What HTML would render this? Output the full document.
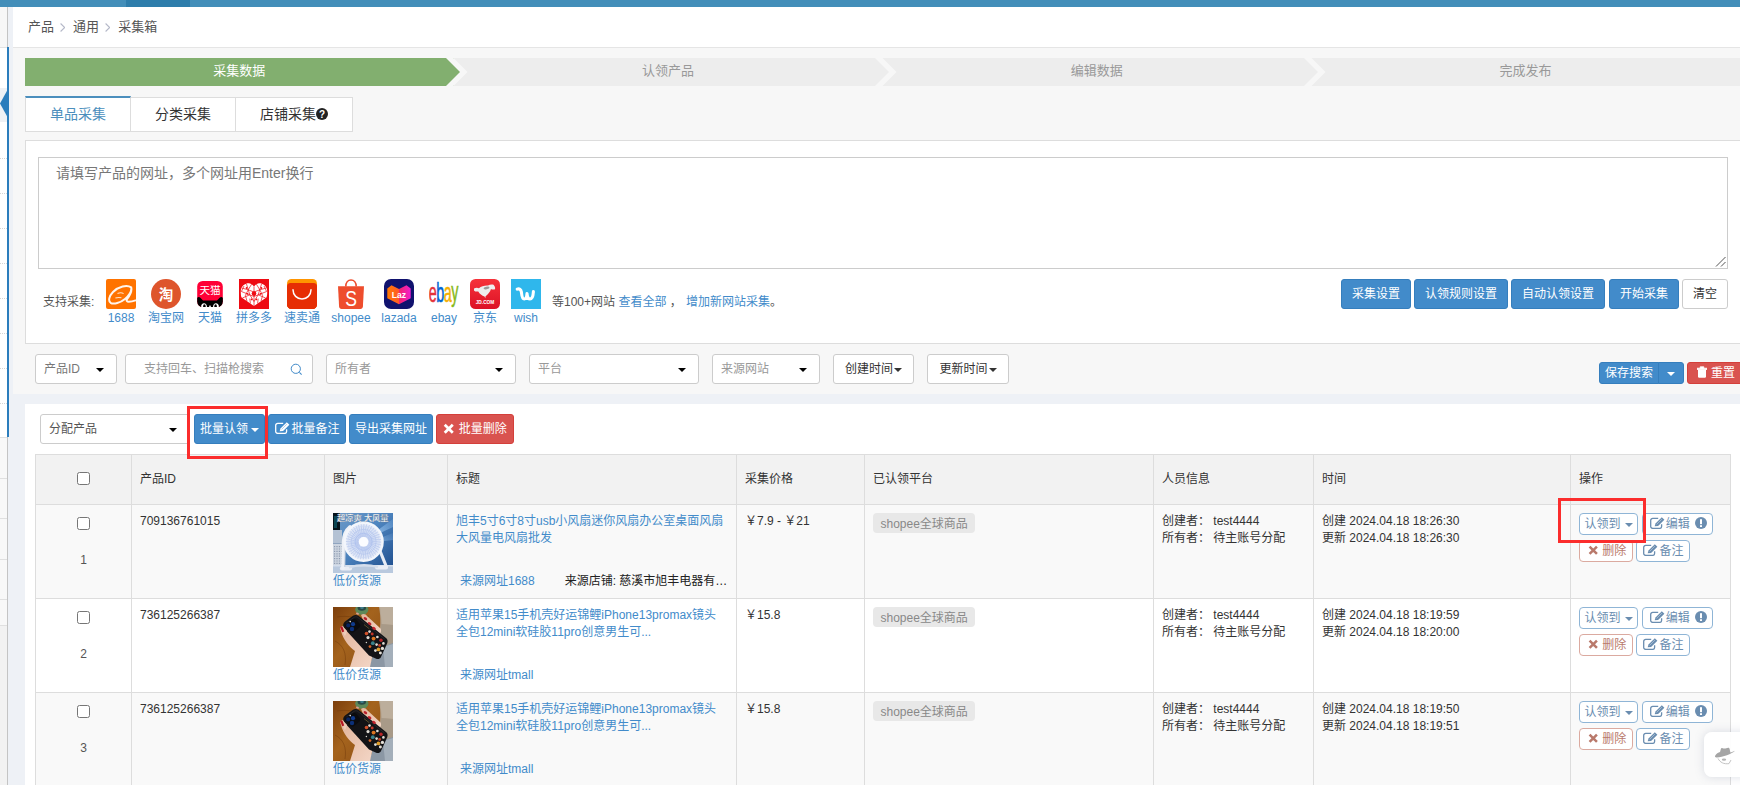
<!DOCTYPE html>
<html lang="zh-CN">
<head>
<meta charset="utf-8">
<title>采集箱</title>
<style>
*{box-sizing:border-box}
html,body{margin:0;padding:0}
body{width:1740px;height:785px;overflow:hidden;position:relative;background:#eef1f6;
 font-family:"Liberation Sans","Noto Sans CJK SC",sans-serif;font-size:12px;line-height:1.428571;color:#333}
a{color:#428bca;text-decoration:none}
.abs{position:absolute}
svg{display:block}
.ic{display:inline-block;vertical-align:middle}
/* top bar */
#topbar{left:0;top:0;width:1740px;height:6.5px;background:#438eb9}
#topbar i{position:absolute;left:126px;top:0;width:64px;height:6.5px;background:#2e7dab}
/* sidebar */
#side{left:0;top:6.5px;width:8px;height:779px;background:#f2f2f2;border-right:1px solid #c4c4c4}
#side .top{position:absolute;left:0;top:0;width:7px;height:41px;background:#f7f7f7;border-bottom:1px solid #e2e2e2}
#side .act{position:absolute;left:0;top:41px;width:7px;height:389px;background:#fff}
#side .hl{position:absolute;left:0;top:81px;width:7px;height:34px;background:#eef1f5}
#side .dot{position:absolute;left:0;width:7px;height:0;border-top:1px dotted #d5d5d5}
#side .sol{position:absolute;left:0;width:7px;height:0;border-top:1px solid #e0e0e0}
#side .low{position:absolute;left:0;top:430px;width:7px;height:188px;background:#f8f8f8}
#sideblue{left:7px;top:47px;width:2px;height:390px;background:#2b7dbc}
#sidearrow{left:0;top:89px}
/* breadcrumb */
#crumb{left:13px;top:6.5px;width:1727px;height:41.5px;background:#fff;border-bottom:1px solid #e5e5e5;font-size:13px;color:#555;line-height:40px;padding-left:15px}
#crumb span.t{color:#555}
#crumb span.s{color:#b2b6bf;margin:0 6px 0 5px;font-size:13px}
#sec1{left:13px;top:48px;width:1727px;height:346px;background:#f7f7f7}
/* steps */
#steps{left:25px;top:58px;width:1715px;height:28px;background:#ededed;display:flex;font-size:13px;line-height:26px;color:#999;text-align:center}
#steps div{flex:1 1 0;position:relative}
#steps .on{background:#82af6f;color:#fff}
#steps svg{position:absolute;top:0}
/* tabs */
#tabs{left:25px;top:96px;height:36px;display:flex;align-items:flex-end;font-size:14px;line-height:20px}
#tabs div{height:35px;padding:6px 0 0;text-align:center;background:#fff;border:1px solid #ddd;border-left-width:0;color:#333}
#tabs div:first-child{height:36px;border-left-width:1px;border-top:2px solid #4c8fbd;color:#4c8fbd;padding-top:6px}
/* panel 1 */
#p1{left:25px;top:140px;width:1730px;height:204px;background:#fff;border:1px solid #ddd}
#ta{left:38px;top:157px;width:1690px;height:112px;background:#fff;border:1px solid #ccc;font-size:14px;color:#777;padding:5px 17px;line-height:20px}
.btn{position:absolute;height:30px;line-height:28px;text-align:center;color:#fff;background:#428bca;border:1px solid #357ebd;border-radius:3px;font-size:12px;white-space:nowrap}
.btn.red{background:#d9534f;border-color:#d43f3a}
.btn.wh{background:#fff;border-color:#ccc;color:#333}
.btn.sm{height:22px;line-height:20px}
/* form controls */
.sel{position:absolute;height:30px;border:1px solid #ccc;border-radius:3px;background:#fff;line-height:28px;padding-left:8px;color:#555;font-size:12px;white-space:nowrap}
.sel.ph{color:#999}
.sel.noc:after{display:none}
.sel:after{content:"";position:absolute;right:12px;top:12.5px;border:4px solid transparent;border-top:4px solid #000;border-bottom-width:0;border-left-width:4px;border-right-width:4px}
.car{display:inline-block;border:4px solid transparent;border-top-color:currentColor;border-bottom-width:0;vertical-align:middle;margin-left:2px}
/* panel 2 */
#p2{left:25px;top:404px;width:1730px;height:400px;background:#fff}
.redbox{position:absolute;border:3px solid #fb2d2d;z-index:5}
/* table */
#tb{left:35px;top:454px;width:1695px;border-collapse:collapse;table-layout:fixed;font-size:12px}
#tb th,#tb td{border:1px solid #ddd;padding:8px;vertical-align:top;text-align:left;font-weight:normal;color:#333}
#tb th{background:#f2f2f2;height:50px;vertical-align:middle;color:#333}
#tb tr.odd td{background:#f9f9f9}
#tb td{height:94px;background:#fff}
#tb td.c,#tb th.c{text-align:center}
.cb{display:inline-block;width:13px;height:13px;border:1px solid #767676;border-radius:2.5px;background:#fff;vertical-align:top}
.badge{display:inline-block;background:#e8e8e8;color:#888;border-radius:4px;padding:0 7.5px;height:20px;line-height:22px;margin-top:0}
.ob{display:inline-block;height:22px;line-height:20px;border:1px solid #8fb5d6;border-radius:4px;background:#fff;color:#6a8db0;font-size:12px;text-align:center;white-space:nowrap;vertical-align:top}
.ob.del{border-color:#dbaaa0;color:#b9796b}
</style>
</head>
<body>
<div id="topbar" class="abs"><i></i></div>
<div id="side" class="abs">
 <div class="top"></div><div class="act"></div><div class="hl"></div>
 <div class="dot" style="top:151px"></div><div class="dot" style="top:186px"></div><div class="dot" style="top:221px"></div><div class="dot" style="top:256px"></div><div class="dot" style="top:291px"></div><div class="dot" style="top:326px"></div><div class="dot" style="top:361px"></div><div class="dot" style="top:396px"></div>
 <div class="low"></div>
 <div class="sol" style="top:430px"></div><div class="sol" style="top:471px"></div><div class="sol" style="top:511px"></div><div class="sol" style="top:552px"></div><div class="sol" style="top:592px"></div><div class="sol" style="top:618px"></div>
</div>
<div id="sideblue" class="abs"></div>
<svg id="sidearrow" class="abs" width="8" height="29" viewBox="0 0 8 29"><path d="M8 0 L0 14.5 L8 29Z" fill="#2b7dbc"/></svg>
<div id="crumb" class="abs"><span class="t">产品</span><svg class="ic" style="margin:0 8px 0 5.7px" width="5.4" height="9" viewBox="0 0 5.4 9"><path d="M.6 .5L4.7 4.5L.6 8.5" fill="none" stroke="#b4b8c8" stroke-width="1.1"/></svg><span class="t">通用</span><svg class="ic" style="margin:0 8px 0 5.7px" width="5.4" height="9" viewBox="0 0 5.4 9"><path d="M.6 .5L4.7 4.5L.6 8.5" fill="none" stroke="#b4b8c8" stroke-width="1.1"/></svg><span class="t">采集箱</span></div>
<div id="sec1" class="abs"></div>

<div id="steps" class="abs">
 <div class="on">采集数据<svg style="left:421px" width="22" height="28" viewBox="0 0 22 28"><path d="M0 0H7.5L21.5 14L7.5 28H0Z" fill="#f7f7f7"/><path d="M0 0L14 14L0 28Z" fill="#82af6f"/></svg></div>
 <div>认领产品<svg style="left:421px" width="22" height="28" viewBox="0 0 22 28"><path d="M0 0H7.5L21.5 14L7.5 28H0Z" fill="#f7f7f7"/><path d="M0 0L14 14L0 28Z" fill="#ededed"/></svg></div>
 <div>编辑数据<svg style="left:421px" width="22" height="28" viewBox="0 0 22 28"><path d="M0 0H7.5L21.5 14L7.5 28H0Z" fill="#f7f7f7"/><path d="M0 0L14 14L0 28Z" fill="#ededed"/></svg></div>
 <div>完成发布</div>
</div>
<div id="tabs" class="abs">
 <div style="width:106px">单品采集</div><div style="width:105px">分类采集</div><div style="width:117px">店铺采集<svg class="ic" style="margin:-3px 0 0 0" width="12" height="12" viewBox="0 0 12 12"><circle cx="6" cy="6" r="6" fill="#222"/><text x="6" y="9.6" font-size="10" font-weight="bold" text-anchor="middle" fill="#fff" font-family="Liberation Sans,sans-serif">?</text></svg></div>
</div>
<div id="p1" class="abs"></div>
<div id="ta" class="abs">请填写产品的网址，多个网址用Enter换行<svg class="abs" style="right:1px;bottom:1px" width="11" height="11" viewBox="0 0 11 11"><path d="M10.5 1L1 10.5M10.5 6L6 10.5" stroke="#555" stroke-width="1" fill="none"/></svg></div>
<div class="abs" style="left:43px;top:293px;font-size:12px;color:#555;line-height:18px">支持采集:</div>
<div id="sites" class="abs" style="left:0;top:279px;font-size:12px;line-height:19px;text-align:center;color:#428bca">
<div class="abs" style="left:91px;top:0;width:60px"><svg style="margin:0 auto" width="30" height="30" viewBox="0 0 30 30"><rect width="30" height="30" rx="2" fill="#ff7300"/><path d="M25.2 8.4C21 5.6 12.5 7.4 7 13C3 17.2 2 22 4.6 23.8C7.6 25.6 14.5 23.8 19 20C22 17.4 26 12.5 25.2 8.4C26.4 12.8 23.4 17 21 20.2C20.2 21.6 20.8 22.8 22.8 22.8C25.2 22.6 27.6 22 29.6 21.4" fill="none" stroke="#fff" stroke-width="2" stroke-linecap="round" stroke-linejoin="round" opacity=".93"/><path d="M11.5 14.6C13.5 13.6 16 13.6 17.6 14.6M9.4 19C11.4 18.3 13.4 18.3 15.4 18.8" fill="none" stroke="#ffe3c8" stroke-width="1.1"/></svg>1688</div>
<div class="abs" style="left:136px;top:0;width:60px"><svg style="margin:0 auto" width="30" height="30" viewBox="0 0 30 30"><circle cx="15" cy="15" r="15" fill="#de552c"/><text x="15" y="20.8" font-size="14.5" font-weight="bold" text-anchor="middle" fill="#fff" font-family="Liberation Sans,Noto Sans CJK SC,sans-serif">淘</text></svg>淘宝网</div>
<div class="abs" style="left:180px;top:0;width:60px"><svg style="margin:0 auto" width="30" height="30" viewBox="0 0 30 30"><defs><clipPath id="tmc"><rect x="2.2" y="2" width="25.6" height="26" rx="5.5"/></clipPath></defs><g clip-path="url(#tmc)"><rect x="2" y="2" width="26" height="26" fill="#ff0036"/><path d="M2 28V19C2.8 17.6 4.6 17.8 5.4 18.8L8 21.4H22L24.6 18.8C25.4 17.8 27.2 17.6 28 19V28Z" fill="#000"/><path d="M6 28C6 25.6 7.4 24.2 9 24.2C10.6 24.2 12 25.6 12 28ZM18 28C18 25.6 19.4 24.2 21 24.2C22.6 24.2 24 25.6 24 28Z" fill="#fff"/><ellipse cx="9.4" cy="27.2" rx="1.3" ry="1.9" fill="#000"/><ellipse cx="20.6" cy="27.2" rx="1.3" ry="1.9" fill="#000"/><rect x="14.2" y="26.6" width="1.6" height="1.4" fill="#fff"/></g><text x="15" y="14.9" font-size="10.6" text-anchor="middle" fill="#fff" font-family="Liberation Sans,Noto Sans CJK SC,sans-serif">天猫</text></svg>天猫</div>
<div class="abs" style="left:224px;top:0;width:60px"><svg style="margin:0 auto" width="30" height="30" viewBox="0 0 30 30"><rect width="30" height="30" fill="#ee0a12"/><path d="M15 27L2.6 18.4C1.6 17.6 1.6 11 2.2 9.6C3.4 6.4 6.6 4 10 4.2C12.4 4.4 14 6 15 7.8C16 6 17.6 4.4 20 4.2C23.4 4 26.6 6.4 27.8 9.6C28.4 11 28.4 17.6 27.4 18.4Z" fill="#fff"/><path d="M15 7.8V27M2.4 12.5L15 17.5L27.6 12.5M7.5 5L10.8 15.8M22.5 5L19.2 15.8M3.4 19L10.8 15.8L15 22.5M26.6 19L19.2 15.8L15 22.5M2.6 9L9.2 10.8L12.6 5.2M27.4 9L20.8 10.8L17.4 5.2M9.2 10.8L15 13L20.8 10.8M6.4 16.4L8 22.2M23.6 16.4L22 22.2M10.8 19.6L11.4 24.4M19.2 19.6L18.6 24.4M5 7L2.4 12.5M25 7L27.6 12.5M9.2 10.8L6.4 16.4M20.8 10.8L23.6 16.4" stroke="#ee0a12" stroke-width=".7" fill="none"/><circle cx="15" cy="14.6" r="2.3" fill="#ee0a12"/><circle cx="7.6" cy="9" r=".9" fill="#ee0a12"/><circle cx="22.4" cy="9" r=".9" fill="#ee0a12"/><circle cx="8.4" cy="14.8" r=".9" fill="#ee0a12"/><circle cx="21.6" cy="14.8" r=".9" fill="#ee0a12"/><circle cx="12.6" cy="20.4" r=".9" fill="#ee0a12"/><circle cx="17.4" cy="20.4" r=".9" fill="#ee0a12"/></svg>拼多多</div>
<div class="abs" style="left:272px;top:0;width:60px"><svg style="margin:0 auto" width="30" height="30" viewBox="0 0 30 30"><defs><clipPath id="aec"><rect width="30" height="30" rx="4.5"/></clipPath></defs><g clip-path="url(#aec)"><rect width="30" height="30" fill="#ff9500"/><rect y="4" width="30" height="26" rx="3.5" fill="#e62e04"/><rect y="10" width="30" height="20" fill="#e62e04"/></g><path d="M6 10.8C6 16 10 20 15 20C20 20 24 16 24 10.8" fill="none" stroke="#fff" stroke-width="1.5" stroke-linecap="round"/></svg>速卖通</div>
<div class="abs" style="left:321px;top:0;width:60px"><svg style="margin:0 auto" width="30" height="30" viewBox="0 0 30 30"><path d="M2 7.3H28L26.9 27.6C26.8 28.9 25.8 30 24.5 30H5.5C4.2 30 3.2 28.9 3.1 27.6Z" fill="#ee4d2d"/><path d="M9.8 7.5C9.8 3.8 12 1 15 1C18 1 20.2 3.8 20.2 7.5" fill="none" stroke="#ee4d2d" stroke-width="1.6"/><text transform="translate(15.2,26.6) scale(.8,1)" font-size="22" text-anchor="middle" fill="#fff" font-family="Liberation Sans,Noto Sans CJK SC,sans-serif">S</text></svg>shopee</div>
<div class="abs" style="left:369px;top:0;width:60px"><svg style="margin:0 auto" width="30" height="30" viewBox="0 0 30 30"><defs><linearGradient id="lzg" x1="0" x2="1"><stop offset="0" stop-color="#ff7a00"/><stop offset=".5" stop-color="#ff5a2a"/><stop offset=".52" stop-color="#f5246c"/><stop offset="1" stop-color="#f01ed0"/></linearGradient></defs><rect width="30" height="30" rx="7" fill="#10126e"/><path d="M3.3 9.5L7.5 6.3L15 10L22.5 6.3L26.7 9.5V19.2L15 25.3L3.3 19.2Z" fill="url(#lzg)"/><text x="15" y="18.8" font-size="8.6" font-weight="bold" text-anchor="middle" fill="#fff" font-family="Liberation Sans,Noto Sans CJK SC,sans-serif">Laz</text></svg>lazada</div>
<div class="abs" style="left:414px;top:0;width:60px"><svg style="margin:0 auto" width="30" height="30" viewBox="0 0 30 30"><g transform="translate(-0.3,23.3) scale(.82,1.58)" font-size="17.5" font-family="Liberation Sans,Noto Sans CJK SC,sans-serif"><text x="0" y="0" fill="#e53238" stroke="#e53238" stroke-width=".35">e</text><text x="9.1" y="0" fill="#0064d2" stroke="#0064d2" stroke-width=".35">b</text><text x="18.3" y="0" fill="#f5af02" stroke="#f5af02" stroke-width=".35">a</text><text x="27.4" y="0" fill="#86b817" stroke="#86b817" stroke-width=".35" transform="translate(0,-.6)">y</text></g></svg>ebay</div>
<div class="abs" style="left:455px;top:0;width:60px"><svg style="margin:0 auto" width="30" height="30" viewBox="0 0 30 30"><defs><linearGradient id="jdg" x1="0" y1="0" x2="0" y2="1"><stop offset="0" stop-color="#f6323a"/><stop offset="1" stop-color="#dc1226"/></linearGradient></defs><rect width="30" height="30" rx="5.5" fill="url(#jdg)"/><path d="M4 9.5C5.5 8.6 7.5 8.4 9 9.3C11 7.5 14.5 6.4 18 6.6C19.5 5.6 21.8 5.2 23.5 5.8C24.6 6.8 25.5 8.6 25 10.2C23.5 10.8 22 10.6 21 10C20 13 18 15.6 15.6 17.2L15.3 19.2L14.5 17.6C12 16.8 9.5 14.6 8.3 12.4C6.6 12.9 5 12.5 4 11.4Z" fill="#eee"/><ellipse cx="16.5" cy="9" rx="3" ry="1.2" fill="#9a9a9a" transform="rotate(-12 16.5 9)"/><text x="15" y="24.8" font-size="4.8" font-weight="bold" text-anchor="middle" fill="#fff" font-family="Liberation Sans,Noto Sans CJK SC,sans-serif">JD.COM</text></svg>京东</div>
<div class="abs" style="left:496px;top:0;width:60px"><svg style="margin:0 auto" width="30" height="30" viewBox="0 0 30 30"><rect width="30" height="30" fill="#2fb7ec"/><path d="M6.2 10.2C8.3 9.3 10 10.6 10.4 13C10.8 16.5 11 20 13.2 20C15 20 15.8 17.5 16 14.5C16.3 18 17.2 20 19 20C21.3 20 22.2 16 22.4 12.6" fill="none" stroke="#fff" stroke-width="3.1" stroke-linecap="round" stroke-linejoin="round"/></svg>wish</div>

</div>
<div class="abs" style="left:552px;top:293px;font-size:12px;color:#555;line-height:18px;white-space:nowrap">等100+网站 <a>查看全部</a> ， <a style="margin-left:1px">增加新网站采集</a>。</div>
<div class="btn" style="left:1341px;top:279px;width:70px">采集设置</div>
<div class="btn" style="left:1414px;top:279px;width:94px">认领规则设置</div>
<div class="btn" style="left:1511px;top:279px;width:94px">自动认领设置</div>
<div class="btn" style="left:1609px;top:279px;width:70px">开始采集</div>
<div class="btn wh" style="left:1682px;top:279px;width:46px">清空</div>

<div class="sel" style="left:35px;top:354px;width:82px;color:#777">产品ID</div>
<div class="sel ph noc" style="left:125px;top:354px;width:188px;padding-left:18px">支持回车、扫描枪搜索<svg class="abs" style="right:9px;top:8px" width="13" height="13" viewBox="0 0 13 13"><circle cx="5.8" cy="5.8" r="4.6" fill="none" stroke="#428bca" stroke-width="1"/><path d="M9.4 9.4L11.6 11.6" stroke="#428bca" stroke-width="1.1"/></svg></div>
<div class="sel ph" style="left:326px;top:354px;width:190px">所有者</div>
<div class="sel ph" style="left:529px;top:354px;width:170px">平台</div>
<div class="sel ph" style="left:712px;top:354px;width:108px">来源网站</div>
<div class="btn wh" style="left:833px;top:354px;width:81px">创建时间<span class="car" style="border-width:4.5px 4.5px 0;margin-left:1px"></span></div>
<div class="btn wh" style="left:927px;top:354px;width:82px">更新时间<span class="car" style="border-width:4.5px 4.5px 0;margin-left:1px"></span></div>
<div class="btn sm" style="left:1599px;top:362px;width:60px;border-radius:3px 0 0 3px">保存搜索</div>
<div class="btn sm" style="left:1658px;top:362px;width:26px;border-radius:0 3px 3px 0;border-left-color:#357ebd"><span class="car" style="margin:0"></span></div>
<div class="btn sm red" style="left:1687px;top:362px;width:60px;text-align:left;padding-left:9px"><svg class="ic" style="margin:-3px 4px 0 0" width="10" height="12" viewBox="0 0 10 12"><path d="M0 2.2H10V3.4H0ZM3.2 2.2V.8H6.8V2.2" fill="currentColor" stroke="currentColor" stroke-width=".8"/><path d="M1 3.6H9V10.6A1.2 1.2 0 0 1 7.8 11.8H2.2A1.2 1.2 0 0 1 1 10.6Z" fill="currentColor"/></svg>重置</div>

<div id="p2" class="abs"></div>
<div class="sel" style="left:40px;top:414px;width:150px">分配产品</div>
<div class="btn" style="left:194px;top:414px;width:71px">批量认领<span class="car" style="margin-left:3px"></span></div>
<div class="btn" style="left:268px;top:414px;width:78px;padding-left:1px"><svg class="ic" style="margin:-4px 1px 0 0" width="15" height="12" viewBox="0 0 15 12"><path d="M11.6 7.2V9.4A2 2 0 0 1 9.6 11.4H2.7A2 2 0 0 1 .7 9.4V3.4A2 2 0 0 1 2.7 1.4H8.2" fill="none" stroke="currentColor" stroke-width="1.3"/><path d="M4.7 9.3L5.5 6.5L11.8 .2L14.4 2.8L8.1 9.1Z" fill="currentColor"/><path d="M6.6 7.4L11.9 2.1" stroke="#428bca" stroke-width=".7" opacity=".55"/></svg>批量备注</div>
<div class="btn" style="left:349px;top:414px;width:84px">导出采集网址</div>
<div class="btn red" style="left:436px;top:414px;width:78px"><svg class="ic" style="margin:-2px 4px 0 0" width="11.5" height="11.5" viewBox="0 0 10 10"><path d="M1.5 1.5L8.5 8.5M8.5 1.5L1.5 8.5" stroke="currentColor" stroke-width="2.4" fill="none"/></svg>批量删除</div>
<div class="redbox" style="left:187px;top:406px;width:81px;height:53px"></div>

<table id="tb" class="abs"><colgroup><col style="width:96px"><col style="width:193px"><col style="width:123px"><col style="width:289px"><col style="width:128px"><col style="width:289px"><col style="width:160px"><col style="width:257px"><col style="width:160px"></colgroup>
<tr><th class="c"><span class="cb" style="vertical-align:middle;margin-top:-3px"></span></th><th>产品ID</th><th>图片</th><th>标题</th><th>采集价格</th><th>已认领平台</th><th>人员信息</th><th>时间</th><th>操作</th></tr>
<tr class="odd"><td class="c"><span class="cb" style="margin-top:4px"></span><div style="margin-top:22px;color:#555">1</div></td><td>709136761015</td><td><svg width="60" height="60" viewBox="0 0 60 60"><defs><linearGradient id="fbg" x1="0" y1="0" x2="1" y2="1"><stop offset="0" stop-color="#6f9bc8"/><stop offset=".45" stop-color="#4f86c0"/><stop offset="1" stop-color="#1d4c8c"/></linearGradient><radialGradient id="fgr"><stop offset="0" stop-color="#f4f7ff"/><stop offset=".35" stop-color="#cfdcf6"/><stop offset=".75" stop-color="#dbe4f6"/><stop offset="1" stop-color="#eef2fa"/></radialGradient><linearGradient id="fry" x1="0" y1="1" x2="1" y2="0"><stop offset="0" stop-color="#bfe0ff" stop-opacity=".9"/><stop offset="1" stop-color="#9fd0ff" stop-opacity=".15"/></linearGradient></defs><rect width="60" height="60" fill="url(#fbg)"/><path d="M30 28L60 6V14Z" fill="url(#fry)"/><path d="M34 30L60 20V27Z" fill="url(#fry)" opacity=".6"/><rect x="0" y="0" width="7" height="17" fill="#06141c"/><rect x="1" y="3" width="3" height="12" fill="#0d5a6a" opacity=".7"/><path d="M0 17H9V30H0Z" fill="#b4c2d4"/><path d="M0 30H14V33H0Z" fill="#8fa4bf"/><rect x="0" y="31" width="12" height="22" fill="#cdd5e0"/><path d="M1 33h1.2v1.2h-1.2zM1 35.4h1.2v1.2h-1.2zM1 37.8h1.2v1.2h-1.2zM1 40.2h1.2v1.2h-1.2zM1 42.6h1.2v1.2h-1.2zM1 45h1.2v1.2h-1.2zM1 47.4h1.2v1.2h-1.2zM1 49.8h1.2v1.2h-1.2zM3.4 33h1.2v1.2h-1.2zM3.4 35.4h1.2v1.2h-1.2zM3.4 37.8h1.2v1.2h-1.2zM3.4 40.2h1.2v1.2h-1.2zM3.4 42.6h1.2v1.2h-1.2zM3.4 45h1.2v1.2h-1.2zM3.4 47.4h1.2v1.2h-1.2zM3.4 49.8h1.2v1.2h-1.2zM5.8 33h1.2v1.2h-1.2zM5.8 35.4h1.2v1.2h-1.2zM5.8 37.8h1.2v1.2h-1.2zM5.8 40.2h1.2v1.2h-1.2zM5.8 42.6h1.2v1.2h-1.2zM5.8 45h1.2v1.2h-1.2zM5.8 47.4h1.2v1.2h-1.2zM5.8 49.8h1.2v1.2h-1.2zM8.2 33h1.2v1.2h-1.2zM8.2 35.4h1.2v1.2h-1.2zM8.2 37.8h1.2v1.2h-1.2zM8.2 40.2h1.2v1.2h-1.2zM8.2 42.6h1.2v1.2h-1.2zM8.2 45h1.2v1.2h-1.2zM8.2 47.4h1.2v1.2h-1.2zM8.2 49.8h1.2v1.2h-1.2zM10.4 33h1.2v1.2h-1.2zM10.4 35.4h1.2v1.2h-1.2zM10.4 37.8h1.2v1.2h-1.2zM10.4 40.2h1.2v1.2h-1.2zM10.4 42.6h1.2v1.2h-1.2zM10.4 45h1.2v1.2h-1.2zM10.4 47.4h1.2v1.2h-1.2zM10.4 49.8h1.2v1.2h-1.2z" fill="#8e9bb0"/><path d="M0 52H60V60H0Z" fill="#b9c9de"/><path d="M0 52H60V53.5H0Z" fill="#d4deec"/><path d="M47 38L53.5 54" stroke="#e6ebf4" stroke-width="3.2" stroke-linecap="round" fill="none"/><path d="M9 55.5H17" stroke="#e9edf5" stroke-width="4.2" stroke-linecap="round"/><path d="M44 54.5H53" stroke="#e9edf5" stroke-width="4" stroke-linecap="round"/><path d="M16 54.5Q30 50 45 54" stroke="#d5deec" stroke-width="2.2" fill="none"/><path d="M17 14C12 18 10.5 24 10.5 30L10 55" stroke="#eef1f7" stroke-width="3.6" stroke-linecap="round" fill="none"/><path d="M12.3 30L11.8 54" stroke="#c3cede" stroke-width="1" fill="none"/><circle cx="30.6" cy="28.8" r="19" fill="url(#fgr)"/><path d="M35.6 28.8L48.3 32.0M35.5 29.6L47.6 34.8M35.4 30.3L46.4 37.3M35.1 31.1L44.9 39.7M34.6 31.7L43.0 41.8M34.1 32.3L40.8 43.6M33.5 32.8L38.4 45.0M32.9 33.3L35.8 46.0M32.1 33.6L33.0 46.6M31.4 33.7L30.2 46.8M30.6 33.8L27.4 46.5M29.8 33.7L24.6 45.8M29.1 33.6L22.1 44.6M28.3 33.3L19.7 43.1M27.7 32.8L17.6 41.2M27.1 32.3L15.8 39.0M26.6 31.7L14.4 36.6M26.1 31.1L13.4 34.0M25.8 30.3L12.8 31.2M25.7 29.6L12.6 28.4M25.6 28.8L12.9 25.6M25.7 28.0L13.6 22.8M25.8 27.3L14.8 20.3M26.1 26.5L16.3 17.9M26.6 25.9L18.2 15.8M27.1 25.3L20.4 14.0M27.7 24.8L22.8 12.6M28.3 24.3L25.4 11.6M29.1 24.0L28.2 11.0M29.8 23.9L31.0 10.8M30.6 23.8L33.8 11.1M31.4 23.9L36.6 11.8M32.1 24.0L39.1 13.0M32.9 24.3L41.5 14.5M33.5 24.8L43.6 16.4M34.1 25.3L45.4 18.6M34.6 25.9L46.8 21.0M35.1 26.5L47.8 23.6M35.4 27.3L48.4 26.4M35.5 28.0L48.6 29.2" stroke="#9fb4e6" stroke-width=".55" fill="none" opacity=".85"/><circle cx="30.6" cy="28.8" r="12.5" fill="none" stroke="#b5c6ee" stroke-width=".7"/><circle cx="30.6" cy="28.8" r="8.5" fill="none" stroke="#a9bdee" stroke-width=".7"/><circle cx="30.6" cy="28.8" r="15.8" fill="none" stroke="#c9d6f2" stroke-width=".7"/><circle cx="30.6" cy="28.8" r="19" fill="none" stroke="#f3f6fc" stroke-width="2.4"/><circle cx="30.6" cy="28.8" r="4.8" fill="#fbfcff"/><text x="29.8" y="7.7" font-size="8.2" font-weight="bold" text-anchor="middle" fill="#fff" stroke="#6b7f99" stroke-width=".25" font-family="Liberation Sans,Noto Sans CJK SC,sans-serif">超凉爽 大风量</text></svg><a style="display:block;line-height:17px">低价货源</a></td><td><a style="display:block;height:60px">旭丰5寸6寸8寸usb小风扇迷你风扇办公室桌面风扇大风量电风扇批发</a><div style="white-space:nowrap;overflow:hidden;padding-left:4px;line-height:17px"><a>来源网址1688</a><span style="margin-left:30px;color:#222">来源店铺: 慈溪市旭丰电器有…</span></div></td><td>￥7.9 - ￥21</td><td><span class="badge">shopee全球商品</span></td><td>创建者： test4444<br>所有者： 待主账号分配</td><td>创建 2024.04.18 18:26:30<br>更新 2024.04.18 18:26:30</td><td style="padding-right:0;white-space:nowrap"><span class="ob" style="width:59px">认领到<span class="car" style="margin-left:4px"></span></span><span class="ob" style="width:71.5px;margin-left:3.5px;padding-left:2px"><svg class="ic" style="margin:-4px 1px 0 0" width="15" height="12" viewBox="0 0 15 12"><path d="M11.6 7.2V9.4A2 2 0 0 1 9.6 11.4H2.7A2 2 0 0 1 .7 9.4V3.4A2 2 0 0 1 2.7 1.4H8.2" fill="none" stroke="currentColor" stroke-width="1.3"/><path d="M4.7 9.3L5.5 6.5L11.8 .2L14.4 2.8L8.1 9.1Z" fill="currentColor"/><path d="M6.6 7.4L11.9 2.1" stroke="#fff" stroke-width=".7" opacity=".55"/></svg>编辑<svg class="ic" style="margin:-3px 0 0 5px" width="12" height="12" viewBox="0 0 12 12"><circle cx="6" cy="6" r="6" fill="currentColor"/><rect x="5" y="2.2" width="2" height="5" fill="#fff"/><rect x="5" y="8.2" width="2" height="1.8" fill="#fff"/></svg></span><br><span class="ob del" style="width:54px;margin-top:5px;padding-left:1px"><svg class="ic" style="margin:-3px 4px 0 1px" width="10.5" height="10.5" viewBox="0 0 10 10"><path d="M1.5 1.5L8.5 8.5M8.5 1.5L1.5 8.5" stroke="currentColor" stroke-width="2.4" fill="none"/></svg>删除</span><span class="ob" style="width:54px;margin:5px 0 0 2.5px;padding-left:2px"><svg class="ic" style="margin:-4px 1px 0 0" width="15" height="12" viewBox="0 0 15 12"><path d="M11.6 7.2V9.4A2 2 0 0 1 9.6 11.4H2.7A2 2 0 0 1 .7 9.4V3.4A2 2 0 0 1 2.7 1.4H8.2" fill="none" stroke="currentColor" stroke-width="1.3"/><path d="M4.7 9.3L5.5 6.5L11.8 .2L14.4 2.8L8.1 9.1Z" fill="currentColor"/><path d="M6.6 7.4L11.9 2.1" stroke="#fff" stroke-width=".7" opacity=".55"/></svg>备注</span></td></tr>
<tr class=""><td class="c"><span class="cb" style="margin-top:4px"></span><div style="margin-top:22px;color:#555">2</div></td><td>736125266387</td><td><svg width="60" height="60" viewBox="0 0 60 60"><defs><linearGradient id="wda" x1="0" y1="0" x2="1" y2="1"><stop offset="0" stop-color="#7c3f0c"/><stop offset=".45" stop-color="#a4631d"/><stop offset="1" stop-color="#8b4e16"/></linearGradient><linearGradient id="ska" x1="0" y1="0" x2="1" y2="1"><stop offset="0" stop-color="#e2b49b"/><stop offset="1" stop-color="#f3d6c6"/></linearGradient></defs><rect width="60" height="60" fill="#b3a28e"/><path d="M47 0H60V18L49 17Z" fill="#bcae9c"/><path d="M48 17L60 18V44L47 40Z" fill="#a89a88"/><path d="M0 0H46C48 10 48 22 45 34C43 44 41 52 40 60H0Z" fill="url(#wda)"/><path d="M4 10C14 8 26 12 36 9M2 34C10 38 14 46 12 58M22 50C26 54 30 56 36 56" stroke="#6f3609" stroke-width=".8" fill="none" opacity=".55"/><path d="M42 42L60 36V60H36Z" fill="#8b97a4"/><path d="M50 40L60 37V60H52Z" fill="#a4afba"/><ellipse cx="28.8" cy="2.6" rx="6.6" ry="5.2" fill="#5d8858"/><ellipse cx="28.8" cy="1" rx="4.2" ry="2.8" fill="#2a4a48"/><ellipse cx="29" cy=".8" rx="1.8" ry="1.2" fill="#3f7d8a"/><path d="M28 8C30 6 33 7 34 9L47 21C49 23 48 26 46 27L34 22Z" fill="url(#ska)"/><path d="M8 24C7 21 9 18 12 20L30 34L40 46L37 60H17L22 44C16 40 10 32 8 24Z" fill="url(#ska)"/><path d="M12 14.6L20 8.8C21.6 7.6 23.8 7.6 25.4 8.8L53 31C54.6 32.2 55 34.4 54.2 36.2L48 50C47.2 51.8 45 52.6 43.2 51.8L36 48.4L11.4 21.6C9.6 19.6 9.8 16.2 12 14.6Z" fill="#131316"/><path d="M13.2 16.2L21 10.4C22.2 9.6 23.6 9.6 24.8 10.4L51.6 32" stroke="#2c2c31" stroke-width=".8" fill="none"/><path d="M13.6 16.6L19.6 12.4C21 11.6 22.4 11.8 23.4 12.8L26.6 16.8C27.6 18 27.4 19.8 26.2 20.8L21 25C19.8 26 18 25.8 17 24.6L13 19.8C12.2 18.8 12.4 17.4 13.6 16.6Z" fill="#0b0b0e"/><circle cx="15.2" cy="18.4" r="2.1" fill="#0a2560"/><circle cx="20" cy="17.2" r="2.1" fill="#0f3a8c"/><circle cx="19" cy="22" r="2.2" fill="#0c3078"/><circle cx="17.2" cy="14.6" r=".8" fill="#e9e9ea"/><path d="M7.4 22C7 20 8.6 18.6 10.2 19.8L14 24L12 29Z" fill="url(#ska)"/><path d="M7.2 20.2C7.6 19 9 19 9.6 20L11.2 24.4L9.2 25.2Z" fill="#b31622"/><ellipse cx="32.4" cy="11.6" rx="2" ry="1.3" fill="#b8202a" transform="rotate(35 32.4 11.6)"/><ellipse cx="36.6" cy="16.6" rx="2" ry="1.3" fill="#c2222c" transform="rotate(35 36.6 16.6)"/><ellipse cx="41" cy="21.4" rx="2" ry="1.3" fill="#c2222c" transform="rotate(35 41 21.4)"/><ellipse cx="24.5" cy="6.6" rx="1.6" ry="1" fill="#d9a090" transform="rotate(25 24.5 6.6)"/><circle cx="33.5" cy="26.5" r="1.80" fill="#e2562c" opacity=".92"/><circle cx="36.5" cy="24.6" r="1.31" fill="#f4ede4" opacity=".92"/><circle cx="39.2" cy="27" r="1.48" fill="#d13a2a" opacity=".92"/><circle cx="35" cy="30.6" r="1.56" fill="#f1ece4" opacity=".92"/><circle cx="40.6" cy="31.6" r="1.97" fill="#ef7d22" opacity=".92"/><circle cx="44.4" cy="30" r="1.31" fill="#f3eee6" opacity=".92"/><circle cx="48" cy="33.2" r="1.72" fill="#c4262a" opacity=".92"/><circle cx="50.4" cy="36.4" r="1.31" fill="#f3eee6" opacity=".92"/><circle cx="39.8" cy="36.2" r="1.89" fill="#3f8d96" opacity=".92"/><circle cx="43.6" cy="37.6" r="1.31" fill="#f2ece2" opacity=".92"/><circle cx="46.6" cy="38.4" r="1.39" fill="#d9452c" opacity=".92"/><circle cx="37" cy="39.6" r="1.39" fill="#e66a27" opacity=".92"/><circle cx="45.4" cy="42.4" r="1.89" fill="#f0a92c" opacity=".92"/><circle cx="49.4" cy="41.4" r="1.64" fill="#f6f2ea" opacity=".92"/><circle cx="42.4" cy="43.6" r="1.39" fill="#f4f0e8" opacity=".92"/><circle cx="47.4" cy="46" r="1.48" fill="#f4f0e8" opacity=".92"/><circle cx="33.4" cy="35.4" r="0.74" fill="#e8e4dc" opacity=".92"/><path d="M31 17.6L36.4 21.8" stroke="#8c7a3c" stroke-width=".6"/></svg><a style="display:block;line-height:17px">低价货源</a></td><td><a style="display:block;height:60px">适用苹果15手机壳好运锦鲤iPhone13promax镜头全包12mini软硅胶11pro创意男生可...</a><div style="white-space:nowrap;overflow:hidden;padding-left:4px;line-height:17px"><a>来源网址tmall</a></div></td><td>￥15.8</td><td><span class="badge">shopee全球商品</span></td><td>创建者： test4444<br>所有者： 待主账号分配</td><td>创建 2024.04.18 18:19:59<br>更新 2024.04.18 18:20:00</td><td style="padding-right:0;white-space:nowrap"><span class="ob" style="width:59px">认领到<span class="car" style="margin-left:4px"></span></span><span class="ob" style="width:71.5px;margin-left:3.5px;padding-left:2px"><svg class="ic" style="margin:-4px 1px 0 0" width="15" height="12" viewBox="0 0 15 12"><path d="M11.6 7.2V9.4A2 2 0 0 1 9.6 11.4H2.7A2 2 0 0 1 .7 9.4V3.4A2 2 0 0 1 2.7 1.4H8.2" fill="none" stroke="currentColor" stroke-width="1.3"/><path d="M4.7 9.3L5.5 6.5L11.8 .2L14.4 2.8L8.1 9.1Z" fill="currentColor"/><path d="M6.6 7.4L11.9 2.1" stroke="#fff" stroke-width=".7" opacity=".55"/></svg>编辑<svg class="ic" style="margin:-3px 0 0 5px" width="12" height="12" viewBox="0 0 12 12"><circle cx="6" cy="6" r="6" fill="currentColor"/><rect x="5" y="2.2" width="2" height="5" fill="#fff"/><rect x="5" y="8.2" width="2" height="1.8" fill="#fff"/></svg></span><br><span class="ob del" style="width:54px;margin-top:5px;padding-left:1px"><svg class="ic" style="margin:-3px 4px 0 1px" width="10.5" height="10.5" viewBox="0 0 10 10"><path d="M1.5 1.5L8.5 8.5M8.5 1.5L1.5 8.5" stroke="currentColor" stroke-width="2.4" fill="none"/></svg>删除</span><span class="ob" style="width:54px;margin:5px 0 0 2.5px;padding-left:2px"><svg class="ic" style="margin:-4px 1px 0 0" width="15" height="12" viewBox="0 0 15 12"><path d="M11.6 7.2V9.4A2 2 0 0 1 9.6 11.4H2.7A2 2 0 0 1 .7 9.4V3.4A2 2 0 0 1 2.7 1.4H8.2" fill="none" stroke="currentColor" stroke-width="1.3"/><path d="M4.7 9.3L5.5 6.5L11.8 .2L14.4 2.8L8.1 9.1Z" fill="currentColor"/><path d="M6.6 7.4L11.9 2.1" stroke="#fff" stroke-width=".7" opacity=".55"/></svg>备注</span></td></tr>
<tr class="odd"><td class="c"><span class="cb" style="margin-top:4px"></span><div style="margin-top:22px;color:#555">3</div></td><td>736125266387</td><td><svg width="60" height="60" viewBox="0 0 60 60"><defs><linearGradient id="wdb" x1="0" y1="0" x2="1" y2="1"><stop offset="0" stop-color="#7c3f0c"/><stop offset=".45" stop-color="#a4631d"/><stop offset="1" stop-color="#8b4e16"/></linearGradient><linearGradient id="skb" x1="0" y1="0" x2="1" y2="1"><stop offset="0" stop-color="#e2b49b"/><stop offset="1" stop-color="#f3d6c6"/></linearGradient></defs><rect width="60" height="60" fill="#b3a28e"/><path d="M47 0H60V18L49 17Z" fill="#bcae9c"/><path d="M48 17L60 18V44L47 40Z" fill="#a89a88"/><path d="M0 0H46C48 10 48 22 45 34C43 44 41 52 40 60H0Z" fill="url(#wdb)"/><path d="M4 10C14 8 26 12 36 9M2 34C10 38 14 46 12 58M22 50C26 54 30 56 36 56" stroke="#6f3609" stroke-width=".8" fill="none" opacity=".55"/><path d="M42 42L60 36V60H36Z" fill="#8b97a4"/><path d="M50 40L60 37V60H52Z" fill="#a4afba"/><ellipse cx="28.8" cy="2.6" rx="6.6" ry="5.2" fill="#5d8858"/><ellipse cx="28.8" cy="1" rx="4.2" ry="2.8" fill="#2a4a48"/><ellipse cx="29" cy=".8" rx="1.8" ry="1.2" fill="#3f7d8a"/><path d="M28 8C30 6 33 7 34 9L47 21C49 23 48 26 46 27L34 22Z" fill="url(#skb)"/><path d="M8 24C7 21 9 18 12 20L30 34L40 46L37 60H17L22 44C16 40 10 32 8 24Z" fill="url(#skb)"/><path d="M12 14.6L20 8.8C21.6 7.6 23.8 7.6 25.4 8.8L53 31C54.6 32.2 55 34.4 54.2 36.2L48 50C47.2 51.8 45 52.6 43.2 51.8L36 48.4L11.4 21.6C9.6 19.6 9.8 16.2 12 14.6Z" fill="#131316"/><path d="M13.2 16.2L21 10.4C22.2 9.6 23.6 9.6 24.8 10.4L51.6 32" stroke="#2c2c31" stroke-width=".8" fill="none"/><path d="M13.6 16.6L19.6 12.4C21 11.6 22.4 11.8 23.4 12.8L26.6 16.8C27.6 18 27.4 19.8 26.2 20.8L21 25C19.8 26 18 25.8 17 24.6L13 19.8C12.2 18.8 12.4 17.4 13.6 16.6Z" fill="#0b0b0e"/><circle cx="15.2" cy="18.4" r="2.1" fill="#0a2560"/><circle cx="20" cy="17.2" r="2.1" fill="#0f3a8c"/><circle cx="19" cy="22" r="2.2" fill="#0c3078"/><circle cx="17.2" cy="14.6" r=".8" fill="#e9e9ea"/><path d="M7.4 22C7 20 8.6 18.6 10.2 19.8L14 24L12 29Z" fill="url(#skb)"/><path d="M7.2 20.2C7.6 19 9 19 9.6 20L11.2 24.4L9.2 25.2Z" fill="#b31622"/><ellipse cx="32.4" cy="11.6" rx="2" ry="1.3" fill="#b8202a" transform="rotate(35 32.4 11.6)"/><ellipse cx="36.6" cy="16.6" rx="2" ry="1.3" fill="#c2222c" transform="rotate(35 36.6 16.6)"/><ellipse cx="41" cy="21.4" rx="2" ry="1.3" fill="#c2222c" transform="rotate(35 41 21.4)"/><ellipse cx="24.5" cy="6.6" rx="1.6" ry="1" fill="#d9a090" transform="rotate(25 24.5 6.6)"/><circle cx="33.5" cy="26.5" r="1.80" fill="#e2562c" opacity=".92"/><circle cx="36.5" cy="24.6" r="1.31" fill="#f4ede4" opacity=".92"/><circle cx="39.2" cy="27" r="1.48" fill="#d13a2a" opacity=".92"/><circle cx="35" cy="30.6" r="1.56" fill="#f1ece4" opacity=".92"/><circle cx="40.6" cy="31.6" r="1.97" fill="#ef7d22" opacity=".92"/><circle cx="44.4" cy="30" r="1.31" fill="#f3eee6" opacity=".92"/><circle cx="48" cy="33.2" r="1.72" fill="#c4262a" opacity=".92"/><circle cx="50.4" cy="36.4" r="1.31" fill="#f3eee6" opacity=".92"/><circle cx="39.8" cy="36.2" r="1.89" fill="#3f8d96" opacity=".92"/><circle cx="43.6" cy="37.6" r="1.31" fill="#f2ece2" opacity=".92"/><circle cx="46.6" cy="38.4" r="1.39" fill="#d9452c" opacity=".92"/><circle cx="37" cy="39.6" r="1.39" fill="#e66a27" opacity=".92"/><circle cx="45.4" cy="42.4" r="1.89" fill="#f0a92c" opacity=".92"/><circle cx="49.4" cy="41.4" r="1.64" fill="#f6f2ea" opacity=".92"/><circle cx="42.4" cy="43.6" r="1.39" fill="#f4f0e8" opacity=".92"/><circle cx="47.4" cy="46" r="1.48" fill="#f4f0e8" opacity=".92"/><circle cx="33.4" cy="35.4" r="0.74" fill="#e8e4dc" opacity=".92"/><path d="M31 17.6L36.4 21.8" stroke="#8c7a3c" stroke-width=".6"/></svg><a style="display:block;line-height:17px">低价货源</a></td><td><a style="display:block;height:60px">适用苹果15手机壳好运锦鲤iPhone13promax镜头全包12mini软硅胶11pro创意男生可...</a><div style="white-space:nowrap;overflow:hidden;padding-left:4px;line-height:17px"><a>来源网址tmall</a></div></td><td>￥15.8</td><td><span class="badge">shopee全球商品</span></td><td>创建者： test4444<br>所有者： 待主账号分配</td><td>创建 2024.04.18 18:19:50<br>更新 2024.04.18 18:19:51</td><td style="padding-right:0;white-space:nowrap"><span class="ob" style="width:59px">认领到<span class="car" style="margin-left:4px"></span></span><span class="ob" style="width:71.5px;margin-left:3.5px;padding-left:2px"><svg class="ic" style="margin:-4px 1px 0 0" width="15" height="12" viewBox="0 0 15 12"><path d="M11.6 7.2V9.4A2 2 0 0 1 9.6 11.4H2.7A2 2 0 0 1 .7 9.4V3.4A2 2 0 0 1 2.7 1.4H8.2" fill="none" stroke="currentColor" stroke-width="1.3"/><path d="M4.7 9.3L5.5 6.5L11.8 .2L14.4 2.8L8.1 9.1Z" fill="currentColor"/><path d="M6.6 7.4L11.9 2.1" stroke="#fff" stroke-width=".7" opacity=".55"/></svg>编辑<svg class="ic" style="margin:-3px 0 0 5px" width="12" height="12" viewBox="0 0 12 12"><circle cx="6" cy="6" r="6" fill="currentColor"/><rect x="5" y="2.2" width="2" height="5" fill="#fff"/><rect x="5" y="8.2" width="2" height="1.8" fill="#fff"/></svg></span><br><span class="ob del" style="width:54px;margin-top:5px;padding-left:1px"><svg class="ic" style="margin:-3px 4px 0 1px" width="10.5" height="10.5" viewBox="0 0 10 10"><path d="M1.5 1.5L8.5 8.5M8.5 1.5L1.5 8.5" stroke="currentColor" stroke-width="2.4" fill="none"/></svg>删除</span><span class="ob" style="width:54px;margin:5px 0 0 2.5px;padding-left:2px"><svg class="ic" style="margin:-4px 1px 0 0" width="15" height="12" viewBox="0 0 15 12"><path d="M11.6 7.2V9.4A2 2 0 0 1 9.6 11.4H2.7A2 2 0 0 1 .7 9.4V3.4A2 2 0 0 1 2.7 1.4H8.2" fill="none" stroke="currentColor" stroke-width="1.3"/><path d="M4.7 9.3L5.5 6.5L11.8 .2L14.4 2.8L8.1 9.1Z" fill="currentColor"/><path d="M6.6 7.4L11.9 2.1" stroke="#fff" stroke-width=".7" opacity=".55"/></svg>备注</span></td></tr>
</table>
<div class="redbox" style="left:1558px;top:498px;width:88px;height:45px"></div>

<div class="abs" style="left:1704px;top:732px;width:50px;height:45px;border-radius:8px;background:rgba(255,255,255,.92);box-shadow:0 0 10px rgba(120,130,160,.25)"><svg class="abs" style="left:9.5px;top:15px" width="22" height="18" viewBox="0 0 22 18"><path d="M1 9C2 7 4.5 5.2 6 5L7 1.6C7.3 .8 8 .8 8.6 1.2C10.5 2.2 12.5 1 14.2 .8C15 .8 15.4 1.2 15.6 2L16.4 5.4C17.6 5.2 19.6 4.6 21 3.8C18 7 8 10.6 2.4 10.4C1.4 10.4 .8 9.8 1 9Z" fill="#a5a5a5"/><path d="M4 11.4C6 15.5 10 17.4 15 16.6L17 13" fill="none" stroke="#c4c4c4" stroke-width="1"/><ellipse cx="10" cy="12.6" rx="2.2" ry="1.2" fill="#b5b5b5"/></svg></div>

</body>
</html>
